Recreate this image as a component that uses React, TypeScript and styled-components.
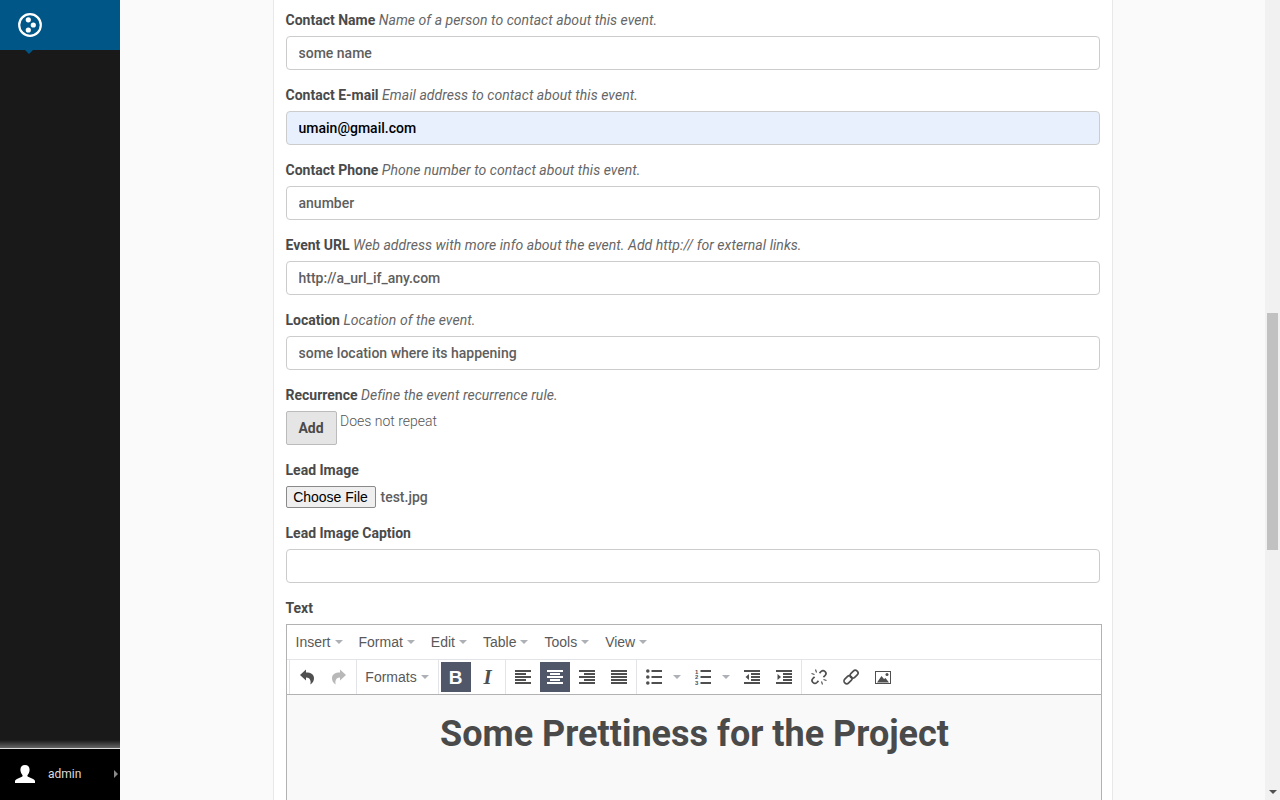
import React from 'react';
import styled, { createGlobalStyle } from 'styled-components';

const GlobalStyle = createGlobalStyle`
    html, body {
        margin: 0;
        height: 100%;
        overflow: hidden;
    }
    body {
        background: #fafafa;
        font-family: Roboto, "Liberation Sans", sans-serif;
        font-size: 14px;
        color: #4a4a4a;
    }
`;

const Page = styled.div`
    display: flex;
    width: 1280px;
    height: 800px;
    overflow: hidden;
`;

const Sidebar = styled.aside`
    display: flex;
    flex-direction: column;
    flex: 0 0 120px;
    background: #191919;
`;

const SidebarHead = styled.div`
    position: relative;
    display: flex;
    align-items: center;
    height: 50px;
    padding-left: 18px;
    background: #005687;
    &::after {
        content: '';
        position: absolute;
        left: 25px;
        top: 50px;
        border-left: 4px solid transparent;
        border-right: 4px solid transparent;
        border-top: 4px solid #005687;
    }
`;

const SidebarFill = styled.div`
    flex: 1;
    background: linear-gradient(to bottom, #191919 calc(100% - 8px), #666 100%);
`;

const UserBar = styled.div`
    display: flex;
    align-items: center;
    box-sizing: border-box;
    height: 52px;
    padding: 0 0 2px 15px;
    background: #000;
    border-top: 1px solid #ddd;
    color: #ddd;
    font-size: 12px;
`;

const UserName = styled.span`
    flex: 1;
    margin-left: 13px;
`;

const UserCaret = styled.span`
    margin-right: 2px;
    border-top: 4px solid transparent;
    border-bottom: 4px solid transparent;
    border-left: 4px solid #888;
`;

const Main = styled.main`
    flex: 1;
    min-width: 0;
`;

const Card = styled.div`
    box-sizing: border-box;
    width: 840px;
    height: 800px;
    margin: 0 auto;
    padding: 10px 11px 0 12px;
    background: #fff;
    border-left: 1px solid #e8e8e8;
    border-right: 1px solid #e8e8e8;
    overflow: hidden;
`;

const Field = styled.div`
    margin-bottom: 15px;
`;

const Label = styled.div`
    height: 20px;
    margin-bottom: 6px;
    line-height: 20px;
    font-weight: 700;
    color: #4a4a4a;
    white-space: nowrap;
`;

const Help = styled.span`
    font-weight: 400;
    font-style: italic;
    letter-spacing: 0.05px;
    color: #666;
`;

const TextInput = styled.input<{ $filled?: boolean }>`
    display: block;
    box-sizing: border-box;
    width: 814px;
    height: 34px;
    padding: 0 12px;
    border: 1px solid #ccc;
    border-radius: 4px;
    outline: none;
    font-family: inherit;
    font-size: 14px;
    font-weight: 500;
    color: ${p => (p.$filled ? '#000' : '#5e5e5e')};
    background: ${p => (p.$filled ? '#e8f0fe' : '#fff')};
`;

const InlineRow = styled.div`
    display: flex;
    align-items: flex-start;
`;

const AddButton = styled.button`
    box-sizing: border-box;
    width: 51px;
    height: 34px;
    padding: 0;
    border: 1px solid #bbb;
    border-radius: 2px;
    background: #e5e5e5;
    font-family: inherit;
    font-size: 14px;
    font-weight: 700;
    color: #4a4a4a;
`;

const Repeat = styled.span`
    margin: 1px 0 0 3.5px;
    line-height: 18px;
    font-weight: 300;
    color: #555;
`;

const FileRow = styled.div`
    display: flex;
    align-items: center;
    height: 22px;
`;

const FileButton = styled.button`
    box-sizing: border-box;
    width: 90px;
    height: 22px;
    padding: 0;
    border: 1px solid #8a8a8a;
    border-radius: 2px;
    background: #efefef;
    font-family: "Liberation Sans", sans-serif;
    font-size: 14px;
    color: #000;
`;

const FileName = styled.span`
    margin-left: 5px;
    font-weight: 500;
    color: #5e5e5e;
`;

const Editor = styled.div`
    width: 814px;
    border: 1px solid #b2b2b2;
    border-bottom: 0;
    font-family: "Liberation Sans", sans-serif;
    color: #595959;
`;

const MenuBar = styled.div`
    display: flex;
    align-items: center;
    height: 34px;
    padding-left: 1px;
    border-bottom: 1px solid #e2e4e7;
`;

const MenuItem = styled.span`
    display: flex;
    align-items: center;
    padding: 0 8px;
    font-size: 14px;
`;

const Caret = styled.i`
    width: 0;
    height: 0;
    margin-left: 4px;
    border-left: 4px solid transparent;
    border-right: 4px solid transparent;
    border-top: 4px solid #adb0b5;
`;

const ToolBar = styled.div`
    display: flex;
    height: 34px;
    padding-left: 2px;
    border-bottom: 1px solid #b2b2b2;
`;

const ToolGroup = styled.div`
    display: flex;
    align-items: center;
    padding: 0 1px;
    border-left: 1px solid #e2e4e7;
`;

const ToolButton = styled.span<{ $active?: boolean; $muted?: boolean }>`
    display: flex;
    align-items: center;
    justify-content: center;
    width: 30px;
    height: 30px;
    margin: 0 1px;
    background: ${p => (p.$active ? '#4f5768' : 'transparent')};
    color: ${p => (p.$active ? '#fff' : p.$muted ? '#b8b8b8' : '#4f4f4f')};
`;

const FormatsButton = styled(ToolButton)`
    width: 77px;
    font-size: 14px;
    color: #595959;
`;

const SplitButton = styled(ToolButton)`
    justify-content: flex-start;
    box-sizing: border-box;
    width: 47px;
    padding-left: 7px;
`;

const SplitCaret = styled(Caret)`
    margin-left: 11px;
`;

const BoldGlyph = styled.span`
    font-size: 19px;
    font-weight: 700;
    line-height: 1;
`;

const ItalicGlyph = styled.span`
    font-family: "Liberation Serif", serif;
    font-size: 21px;
    font-weight: 700;
    font-style: italic;
    line-height: 1;
`;

const EditorBody = styled.div`
    height: 110px;
    padding-top: 19px;
    background: #f9f9f9;
`;

const EditorHeading = styled.h1`
    margin: 0;
    padding-left: 2px;
    font-family: Roboto, sans-serif;
    font-size: 36px;
    line-height: 40px;
    font-weight: 700;
    text-align: center;
    color: #4a4a4a;
`;

const Scrollbar = styled.div`
    position: relative;
    display: flex;
    flex-direction: column;
    align-items: center;
    flex: 0 0 15px;
    background: #f1f1f1;
`;

const ScrollThumb = styled.div`
    width: 11px;
    height: 237px;
    margin-top: 313px;
    background: #c1c1c1;
`;

const ScrollArrow = styled.span`
    position: absolute;
    bottom: 6px;
    left: 4px;
    border-left: 4px solid transparent;
    border-right: 4px solid transparent;
    border-top: 4px solid #505050;
`;

const Icon = ({ children }: { children: React.ReactNode }) => (
    <svg width="16" height="16" viewBox="0 0 16 16" fill="currentColor">{children}</svg>
);

const Lines = ({ rows }: { rows: [number, number, number][] }) => (
    <Icon>
        {rows.map(([x, y, w], i) => <rect key={i} x={x} y={y} width={w} height={2} />)}
    </Icon>
);

const PloneLogo = () => (
    <svg width="24" height="24" viewBox="0 0 24 24" fill="#fff">
        <circle cx="12" cy="12" r="10.8" fill="none" stroke="#fff" strokeWidth="2.2" />
        <circle cx="10.3" cy="6.8" r="2.6" />
        <circle cx="15.3" cy="12" r="2.6" />
        <circle cx="10.3" cy="17" r="2.6" />
    </svg>
);

const UserIcon = () => (
    <svg width="20" height="18" viewBox="0 0 20 18" fill="#fff">
        <path d="M10 0c2.900 0 4.600 2 4.600 4.800 0 2-1 4-2 5.200-.4.600-.2 1.400.5 1.800l5 2.200c1 .5 1.900 1.200 1.900 2.200V18H0v-1.800c0-1 .9-1.700 1.900-2.200l5-2.200c.7-.4.900-1.200.5-1.800-1-1.200-2-3.200-2-5.200C5.400 2 7.100 0 10 0z" />
    </svg>
);

const ListLines = () => (
    <>
        <rect x="5.500" y="1" width="10.500" height="2" />
        <rect x="5.500" y="7" width="10.500" height="2" />
        <rect x="5.500" y="13" width="10.500" height="2" />
    </>
);

const IndentLines = () => (
    <>
        <rect x="0" y="1" width="16" height="2" />
        <rect x="7" y="4" width="9" height="2" />
        <rect x="7" y="7" width="9" height="2" />
        <rect x="7" y="10" width="9" height="2" />
        <rect x="0" y="13" width="16" height="2" />
    </>
);

const fields = [
    { label: 'Contact Name', help: 'Name of a person to contact about this event.', value: 'some name' },
    { label: 'Contact E-mail', help: 'Email address to contact about this event.', value: 'umain@gmail.com', filled: true },
    { label: 'Contact Phone', help: 'Phone number to contact about this event.', value: 'anumber' },
    { label: 'Event URL', help: 'Web address with more info about the event. Add http:// for external links.', value: 'http://a_url_if_any.com' },
    { label: 'Location', help: 'Location of the event.', value: 'some location where its happening' },
];

const menus = ['Insert', 'Format', 'Edit', 'Table', 'Tools', 'View'];

export default function App() {
    return (
        <Page>
            <GlobalStyle />
            <Sidebar>
                <SidebarHead><PloneLogo /></SidebarHead>
                <SidebarFill />
                <UserBar>
                    <UserIcon />
                    <UserName>admin</UserName>
                    <UserCaret />
                </UserBar>
            </Sidebar>
            <Main>
                <Card>
                    {fields.map(f => (
                        <Field key={f.label}>
                            <Label>{f.label} <Help>{f.help}</Help></Label>
                            <TextInput readOnly value={f.value} $filled={f.filled} />
                        </Field>
                    ))}
                    <Field>
                        <Label>Recurrence <Help>Define the event recurrence rule.</Help></Label>
                        <InlineRow>
                            <AddButton>Add</AddButton>
                            <Repeat>Does not repeat</Repeat>
                        </InlineRow>
                    </Field>
                    <Field>
                        <Label>Lead Image</Label>
                        <FileRow>
                            <FileButton>Choose File</FileButton>
                            <FileName>test.jpg</FileName>
                        </FileRow>
                    </Field>
                    <Field>
                        <Label>Lead Image Caption</Label>
                        <TextInput readOnly value="" />
                    </Field>
                    <Field>
                        <Label>Text</Label>
                        <Editor>
                            <MenuBar>
                                {menus.map(m => <MenuItem key={m}>{m}<Caret /></MenuItem>)}
                            </MenuBar>
                            <ToolBar>
                                <ToolGroup>
                                    <ToolButton>
                                        <Icon><path d="M7 .5L1 6l6 5.500V8.500c2.500 0 4 1 4.500 3.500.2 1 .2 2.200-.2 3.500 2.500-1.200 3.700-3.700 3.700-6.200 0-3.800-3-5.800-8-5.800z" /></Icon>
                                    </ToolButton>
                                    <ToolButton $muted>
                                        <Icon><path d="M9 .5L15 6l-6 5.500V8.500c-2.500 0-4 1-4.500 3.500-.2 1-.2 2.200.2 3.500C2.200 14.300 1 11.800 1 9.300 1 5.500 4 3.500 9 3.500z" /></Icon>
                                    </ToolButton>
                                </ToolGroup>
                                <ToolGroup>
                                    <FormatsButton>Formats<Caret /></FormatsButton>
                                </ToolGroup>
                                <ToolGroup>
                                    <ToolButton $active><BoldGlyph>B</BoldGlyph></ToolButton>
                                    <ToolButton><ItalicGlyph>I</ItalicGlyph></ToolButton>
                                </ToolGroup>
                                <ToolGroup>
                                    <ToolButton><Lines rows={[[0, 1, 16], [0, 4, 11], [0, 7, 16], [0, 10, 11], [0, 13, 16]]} /></ToolButton>
                                    <ToolButton $active><Lines rows={[[0, 1, 16], [3, 4, 10], [0, 7, 16], [3, 10, 10], [0, 13, 16]]} /></ToolButton>
                                    <ToolButton><Lines rows={[[0, 1, 16], [5, 4, 11], [0, 7, 16], [5, 10, 11], [0, 13, 16]]} /></ToolButton>
                                    <ToolButton><Lines rows={[[0, 1, 16], [0, 4, 16], [0, 7, 16], [0, 10, 16], [0, 13, 16]]} /></ToolButton>
                                </ToolGroup>
                                <ToolGroup>
                                    <SplitButton>
                                        <Icon>
                                            <circle cx="1.800" cy="2" r="1.800" />
                                            <circle cx="1.800" cy="8" r="1.800" />
                                            <circle cx="1.800" cy="14" r="1.800" />
                                            <ListLines />
                                        </Icon>
                                        <SplitCaret />
                                    </SplitButton>
                                    <SplitButton>
                                        <Icon>
                                            <text x="0" y="4.500" fontSize="6" fontWeight="700" fontFamily="Liberation Sans, sans-serif">1</text>
                                            <text x="0" y="10" fontSize="6" fontWeight="700" fontFamily="Liberation Sans, sans-serif">2</text>
                                            <text x="0" y="15.500" fontSize="6" fontWeight="700" fontFamily="Liberation Sans, sans-serif">3</text>
                                            <ListLines />
                                        </Icon>
                                        <SplitCaret />
                                    </SplitButton>
                                    <ToolButton>
                                        <Icon><IndentLines /><path d="M5 5v6L1.500 8z" /></Icon>
                                    </ToolButton>
                                    <ToolButton>
                                        <Icon><IndentLines /><path d="M1.500 5v6L5 8z" /></Icon>
                                    </ToolButton>
                                </ToolGroup>
                                <ToolGroup>
                                    <ToolButton>
                                        <Icon>
                                            <g fill="none" stroke="currentColor" strokeWidth="1.700">
                                                <path d="M8.500 4.200l1.600-1.700a2.800 2.800 0 0 1 3.900 0l.1.100a2.800 2.800 0 0 1 0 3.900l-1.700 1.700" />
                                                <path d="M7.500 11.800l-1.600 1.700a2.800 2.800 0 0 1-3.900 0l-.1-.1a2.800 2.800 0 0 1 0-3.900l1.700-1.700" />
                                            </g>
                                            <path fill="none" stroke="currentColor" strokeWidth="1.100" d="M4.500 .5l1 3M.5 4.500l3 1M11.500 15.500l-1-3M15.500 11.500l-3-1" />
                                        </Icon>
                                    </ToolButton>
                                    <ToolButton>
                                        <Icon>
                                            <g fill="none" stroke="currentColor" strokeWidth="1.700">
                                                <rect x="6.500" y="2.500" width="9" height="5.500" rx="2.700" transform="rotate(-45 11 5.250)" />
                                                <rect x="0.500" y="8" width="9" height="5.500" rx="2.700" transform="rotate(-45 5 10.750)" />
                                            </g>
                                        </Icon>
                                    </ToolButton>
                                    <ToolButton>
                                        <Icon>
                                            <path fillRule="evenodd" d="M0 2h16v13H0zM1 3v11h14V3z" />
                                            <path d="M2 13.500L6.500 7 9 10l1.500-1 3.500 4.500z" />
                                            <circle cx="12" cy="5.500" r="1.500" />
                                        </Icon>
                                    </ToolButton>
                                </ToolGroup>
                            </ToolBar>
                            <EditorBody>
                                <EditorHeading>Some Prettiness for the Project</EditorHeading>
                            </EditorBody>
                        </Editor>
                    </Field>
                </Card>
            </Main>
            <Scrollbar>
                <ScrollThumb />
                <ScrollArrow />
            </Scrollbar>
        </Page>
    );
}
